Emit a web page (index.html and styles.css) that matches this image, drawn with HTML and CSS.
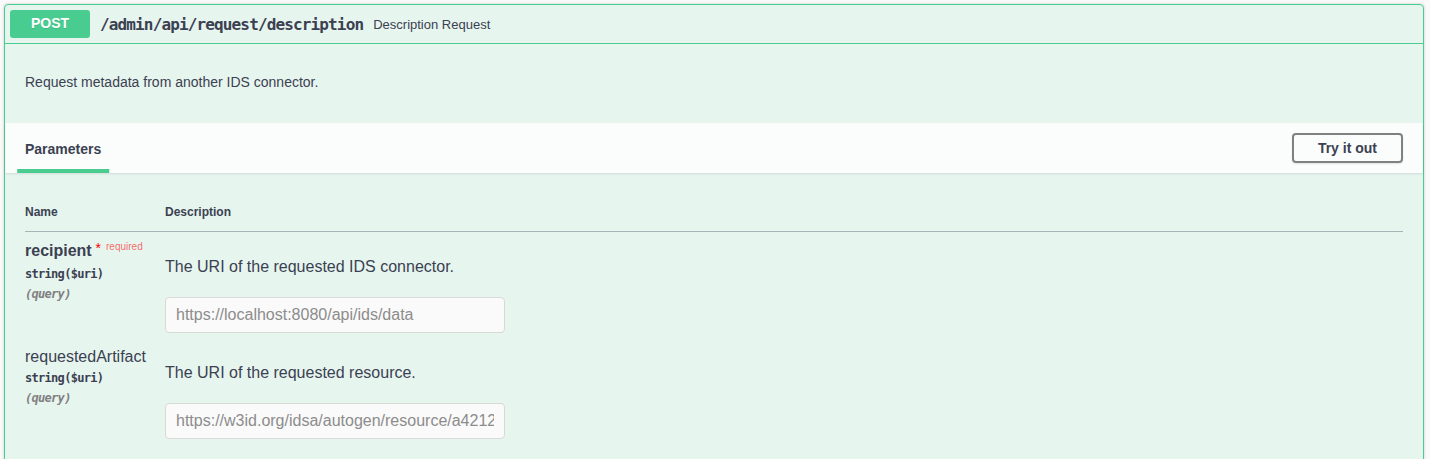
FILE: index.html
```html
<!DOCTYPE html>
<html lang="en">
<head>
<meta charset="utf-8">
<title>POST /admin/api/request/description</title>
<link rel="stylesheet" href="styles.css">
</head>
<body>
<div class="opblock">
  <div class="summary">
    <span class="method">POST</span>
    <span class="path">/admin/api/request/description</span>
    <span class="summary-desc">Description Request</span>
  </div>
  <div class="description">
    <p>Request metadata from another IDS connector.</p>
  </div>
  <div class="section-header">
    <div class="tab"><span class="tab-label">Parameters</span></div>
    <button class="btn-try" type="button">Try it out</button>
  </div>
  <div class="params">
    <table class="param-table">
      <thead>
        <tr><th class="col-name">Name</th><th class="col-desc">Description</th></tr>
      </thead>
      <tbody>
        <tr>
          <td class="col-name">
            <div class="pname req">recipient<span class="star">&nbsp;*</span><span class="req-label">required</span></div>
            <div class="ptype">string($uri)</div>
            <div class="pin">(query)</div>
          </td>
          <td class="col-desc">
            <p class="pdesc">The URI of the requested IDS connector.</p>
            <input class="pinput" type="text" placeholder="https://localhost:8080/api/ids/data">
          </td>
        </tr>
        <tr>
          <td class="col-name">
            <div class="pname">requestedArtifact</div>
            <div class="ptype">string($uri)</div>
            <div class="pin">(query)</div>
          </td>
          <td class="col-desc">
            <p class="pdesc">The URI of the requested resource.</p>
            <input class="pinput" type="text" placeholder="https://w3id.org/idsa/autogen/resource/a4212311-86e4-40b3-ace3-ef29cd687cf9">
          </td>
        </tr>
      </tbody>
    </table>
  </div>
</div>
</body>
</html>
```
FILE: styles.css
```css
html, body {
  margin: 0;
  padding: 0;
  background: #fafafa;
}
body {
  padding: 4px 6px 0 4px;
  font-family: "Liberation Sans", Arial, sans-serif;
  color: #3b4151;
  overflow: hidden;
}
.opblock {
  border: 1px solid #49cc90;
  border-radius: 4px;
  background: rgba(73, 204, 144, 0.1);
  box-shadow: 0 0 3px rgba(0, 0, 0, 0.19);
  height: 480px;
}
.summary {
  display: flex;
  align-items: center;
  padding: 5px;
  border-bottom: 1px solid #49cc90;
}
.method {
  display: inline-block;
  box-sizing: border-box;
  min-width: 80px;
  height: 28px;
  line-height: 27px;
  padding: 0 15px;
  border-radius: 3px;
  background: #49cc90;
  color: #fff;
  font-size: 14px;
  font-weight: 700;
  text-align: center;
  text-shadow: 0 1px 0 rgba(0, 0, 0, 0.1);
}
.path {
  padding: 0 10px;
  font-family: "DejaVu Sans Mono", monospace;
  font-size: 16px;
  font-weight: 700;
  letter-spacing: -0.86px;
  color: #3b4151;
}
.summary-desc {
  font-size: 13px;
  color: #3b4151;
}
.description {
  padding: 30px 20px 32px;
}
.description p {
  margin: 0;
  font-size: 14px;
  line-height: 17px;
}
.section-header {
  display: flex;
  align-items: center;
  justify-content: space-between;
  box-sizing: border-box;
  min-height: 50px;
  padding: 8px 20px;
  background: rgba(255, 255, 255, 0.8);
  box-shadow: 0 1px 2px rgba(0, 0, 0, 0.1);
}
.tab-label {
  position: relative;
  top: 1px;
  font-size: 14px;
  font-weight: 700;
  line-height: 17px;
}
.tab-label::after {
  content: "";
  position: absolute;
  left: 50%;
  bottom: -16px;
  width: 120%;
  height: 4px;
  transform: translateX(-50%);
  background: #49cc90;
}
.btn-try {
  box-sizing: border-box;
  height: 30px;
  padding: 0 24px;
  border: 2px solid #808080;
  border-radius: 4px;
  background: transparent;
  box-shadow: 0 1px 2px rgba(0, 0, 0, 0.1);
  font-family: "Liberation Sans", Arial, sans-serif;
  font-size: 14px;
  font-weight: 700;
  color: #3b4151;
}
.params {
  padding: 20px;
}
.param-table {
  width: 100%;
  border-collapse: collapse;
}
.param-table th {
  padding: 12px 0;
  font-size: 12px;
  line-height: 14px;
  font-weight: 700;
  text-align: left;
  border-bottom: 1px solid rgba(59, 65, 81, 0.2);
}
.col-name {
  width: 140px;
}
.param-table td {
  vertical-align: top;
  padding: 10px 0 0;
}
.param-table td.col-name {
  padding: 10px 0;
}
.pname {
  font-size: 16px;
  line-height: 18px;
}
.pname.req {
  font-weight: 700;
}
.star {
  color: red;
  font-size: 14px;
  font-weight: 400;
  position: relative;
  top: -3px;
}
.req-label {
  position: relative;
  top: -6px;
  padding: 0 0 0 5px;
  font-size: 10px;
  font-weight: 400;
  color: rgba(255, 0, 0, 0.6);
}
.ptype {
  padding: 5px 0 6px;
  font-family: "DejaVu Sans Mono", monospace;
  font-size: 12px;
  line-height: 14px;
  font-weight: 700;
  letter-spacing: -0.7px;
}
.pin {
  font-family: "DejaVu Sans Mono", monospace;
  font-size: 12px;
  line-height: 14px;
  font-style: italic;
  font-weight: 700;
  letter-spacing: -0.7px;
  color: #808080;
}
.pdesc {
  margin: 15px 0 20px;
  font-size: 16px;
  line-height: 20px;
}
.pinput {
  display: block;
  box-sizing: border-box;
  width: 340px;
  height: 36px;
  margin: 0 0 5px;
  padding: 8px 10px;
  border: 1px solid #d9d9d9;
  border-radius: 4px;
  background: #fafafa;
  font-family: "Liberation Sans", Arial, sans-serif;
  font-size: 16px;
  color: #3b4151;
  outline: none;
}
.pinput::placeholder {
  color: #8c8c8c;
}
```
